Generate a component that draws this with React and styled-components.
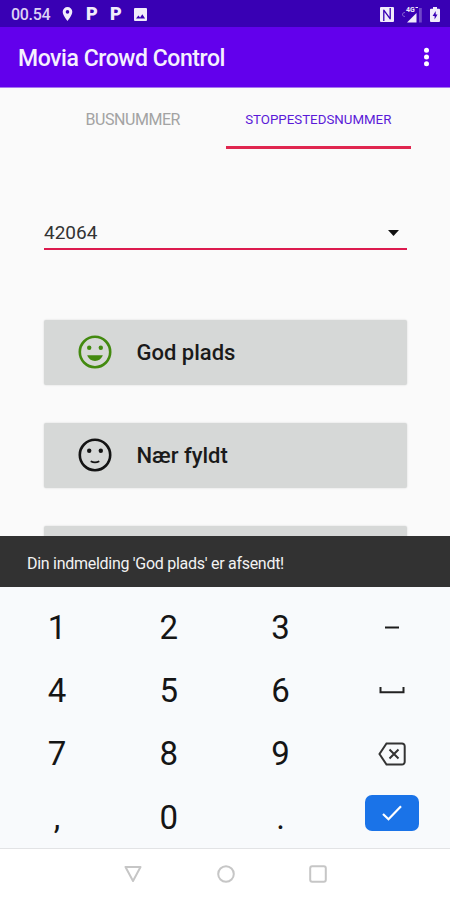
import React, { useState } from 'react';
import styled, { createGlobalStyle } from 'styled-components';

const GlobalStyle = createGlobalStyle`
  * {
    box-sizing: border-box;
  }

  body {
    margin: 0;
    font-family: Roboto, 'Liberation Sans', sans-serif;
    background: #fafafa;
  }

  button {
    font-family: inherit;
    border: none;
    padding: 0;
    background: none;
  }

  svg {
    display: block;
    flex: none;
  }
`;

const Screen = styled.div`
  width: 450px;
  height: 900px;
  display: flex;
  flex-direction: column;
  overflow: hidden;
  background: #fafafa;
`;

const StatusBar = styled.div`
  height: 27px;
  flex: none;
  display: flex;
  align-items: center;
  justify-content: space-between;
  padding: 1px 10px 0 11px;
  background: #3900b4;
  color: #f1ecfb;
`;

const StatusGroup = styled.div`
  display: flex;
  align-items: center;
  gap: ${({ $gap }) => $gap}px;
`;

const Clock = styled.span`
  width: 41px;
  margin-right: -3px;
  padding-top: 1px;
  color: #ddd2f5;
  font-size: 16px;
  font-weight: 500;
  letter-spacing: -0.3px;
  line-height: 26px;
  white-space: nowrap;
`;

const ParkingMark = styled.span`
  width: 11px;
  font-size: 18px;
  font-weight: 900;
  line-height: 26px;
  text-align: center;
`;

const AppBar = styled.header`
  height: 61px;
  flex: none;
  display: flex;
  align-items: center;
  justify-content: space-between;
  padding: 0 20px 0 18px;
  background: #6200ec;
  border-bottom: 1px solid #a576f0;
`;

const Title = styled.h1`
  margin: 0;
  padding-top: 3px;
  color: #f5f0fe;
  font-size: 23px;
  font-weight: 500;
  letter-spacing: -0.44px;
  line-height: 60px;
`;

const MenuButton = styled.button`
  display: block;
`;

const Content = styled.main`
  height: 448px;
  flex: none;
  overflow: hidden;
`;

const Tabs = styled.nav`
  display: flex;
  height: 61px;
  padding: 0 39px 0 40px;
`;

const Tab = styled.button`
  flex: 1;
  height: 61px;
  padding-top: 4px;
  border-bottom: 3px solid ${({ $active }) => ($active ? '#e0264f' : 'transparent')};
  color: ${({ $active }) => ($active ? '#5a1ad8' : '#a3a3a3')};
  font-size: ${({ $active }) => ($active ? '13.3px' : '16px')};
  letter-spacing: ${({ $active }) => ($active ? '0' : '-0.45px')};
`;

const Spinner = styled.div`
  display: flex;
  align-items: center;
  justify-content: space-between;
  height: 35px;
  margin: 66px 43px 0 44px;
  padding: 2px 8px 0 0;
  border-bottom: 2px solid #dc1a4e;
  color: #333;
  font-size: 19px;
`;

const Options = styled.div`
  display: flex;
  flex-direction: column;
  gap: 38px;
  margin: 70px 43px 0 44px;
`;

const Option = styled.button`
  display: flex;
  align-items: center;
  gap: 24.5px;
  height: 65px;
  padding-left: 34px;
  border-radius: 2px;
  background: #d6d8d7;
  box-shadow: 0 0 2px rgba(0, 0, 0, 0.16);
  color: #1a1a1a;
  font-size: 22px;
  font-weight: 500;
`;

const Snackbar = styled.div`
  height: 51px;
  flex: none;
  display: flex;
  align-items: center;
  padding: 3px 27px 0;
  background: #323232;
  color: #f2f2f2;
  font-size: 16px;
  letter-spacing: -0.28px;
`;

const Keypad = styled.div`
  height: 261px;
  flex: none;
  display: grid;
  grid-template-columns: repeat(4, 111.8px);
  grid-auto-rows: 63.2px;
  padding: 9px 0 0 1px;
  background: #f8fafc;
`;

const Key = styled.button`
  display: flex;
  align-items: center;
  justify-content: center;
  color: #151515;
  font-size: 33px;
  line-height: 1;
`;

const EnterKey = styled.span`
  display: flex;
  align-items: center;
  justify-content: center;
  width: 54px;
  height: 36px;
  margin-bottom: 9px;
  border-radius: 7px;
  background: #1a73e8;
`;

const NavBar = styled.footer`
  flex: 1;
  display: flex;
  align-items: center;
  justify-content: center;
  gap: 74.3px;
  padding: 0 0 1px 1px;
  border-top: 1.5px solid #e2e3e5;
  background: #fff;
`;

const PinIcon = () => (
  <svg width="11" height="14" viewBox="0 0 11 14" fill="currentColor">
    <path fillRule="evenodd" d="M5.500 0a4.800 4.800 0 0 0-4.800 4.800C.7 8.300 5.500 14 5.500 14s4.800-5.700 4.800-9.200A4.800 4.800 0 0 0 5.500 0zm0 3.100a1.800 1.800 0 1 1 0 3.600 1.800 1.800 0 0 1 0-3.600z" />
  </svg>
);

const ImageIcon = () => (
  <svg width="13" height="13" viewBox="0 0 13 13">
    <rect width="13" height="13" rx="1" fill="currentColor" />
    <path d="M2 10.500l2.400-3 1.700 2 2.200-3.200 2.800 4.200z" fill="#3900b4" />
  </svg>
);

const NfcIcon = () => (
  <svg width="14" height="15" viewBox="0 0 14 15" fill="none">
    <rect width="14" height="15" rx="1" fill="currentColor" />
    <path d="M3.800 14V3.200l6.400 8.600V1" stroke="#3900b4" strokeWidth="1.300" strokeLinejoin="round" />
  </svg>
);

const SignalIcon = () => (
  <svg width="22" height="17" viewBox="0 0 22 17">
    <path d="M4 6.500c-1.800 0-2.500 1-2.500 2s.7 2 2.500 2" stroke="currentColor" strokeOpacity="0.400" fill="none" />
    <path d="M15.500 7v9.500H6z" fill="currentColor" />
    <path d="M18 2h2.800v14.500H18z" fill="currentColor" opacity="0.300" />
    <text x="5" y="5.800" fontSize="7" fontWeight="700" fill="currentColor">4G</text>
    <path d="M14.500 1.500h2.500" stroke="currentColor" />
  </svg>
);

const BatteryIcon = () => (
  <svg width="10" height="15" viewBox="0 0 10 15">
    <path d="M3 0h4v1.700h2a1 1 0 0 1 1 1V14a1 1 0 0 1-1 1H1a1 1 0 0 1-1-1V2.700a1 1 0 0 1 1-1h2z" fill="currentColor" />
    <path d="M5.700 4L2.600 9h2v3.500L7.500 7.500h-1.800z" fill="#3900b4" />
  </svg>
);

const MoreIcon = () => (
  <svg width="7" height="20" viewBox="0 0 7 20" fill="#fff">
    <circle cx="3.500" cy="3.300" r="2.500" />
    <circle cx="3.500" cy="10" r="2.500" />
    <circle cx="3.500" cy="16.700" r="2.500" />
  </svg>
);

const FaceIcon = ({ color, happy }) => (
  <svg width="34" height="36" viewBox="0 0 34 36" fill="none">
    <circle cx="17" cy="17" r="15.200" stroke={color} strokeWidth="2.600" />
    <circle cx="11.200" cy="12.800" r="2.200" fill={color} />
    <circle cx="22.800" cy="12.800" r="2.200" fill={color} />
    {happy ? (
      <path d="M9.200 20.300h15.600c-1.200 3.500-4.200 5.700-7.800 5.700s-6.600-2.200-7.800-5.700z" fill={color} />
    ) : (
      <path d="M12.700 23.300c2.400 1.300 6.200 1.300 8.600 0" stroke={color} strokeWidth="1.800" />
    )}
  </svg>
);

const SpaceIcon = () => (
  <svg width="26" height="10" viewBox="0 0 26 10" fill="none">
    <path d="M1.500 1v5.200h23V1" stroke="#222" strokeWidth="2" />
  </svg>
);

const BackspaceIcon = () => (
  <svg width="28" height="24" viewBox="0 0 28 24" fill="none" stroke="#333" strokeWidth="2">
    <path d="M8.500 1.500H24a2.700 2.700 0 0 1 2.700 2.700v15.600a2.700 2.700 0 0 1-2.700 2.700H8.500L1.500 12z" />
    <path d="M11.500 7.500l9 9M20.500 7.500l-9 9" />
  </svg>
);

const CheckIcon = () => (
  <svg width="20" height="16" viewBox="0 0 20 16" fill="none">
    <path d="M1 9l5.500 5.300L19 1.300" stroke="#fff" strokeWidth="2.200" />
  </svg>
);

const keys = [
  '1', '2', '3', '–',
  '4', '5', '6', 'space',
  '7', '8', '9', 'backspace',
  ',', '0', '.', 'enter',
];

const keyFaces = {
  '–': (
    <svg width="14" height="3" viewBox="0 0 14 3">
      <rect y="0.500" width="14" height="2" fill="#1c1c1c" />
    </svg>
  ),
  space: <SpaceIcon />,
  backspace: <BackspaceIcon />,
  enter: (
    <EnterKey>
      <CheckIcon />
    </EnterKey>
  ),
};

export default function App() {
  const [tab, setTab] = useState('stop');

  return (
    <>
      <GlobalStyle />
      <Screen>
        <StatusBar>
          <StatusGroup $gap={13}>
            <Clock>00.54</Clock>
            <PinIcon />
            <ParkingMark>P</ParkingMark>
            <ParkingMark>P</ParkingMark>
            <ImageIcon />
          </StatusGroup>
          <StatusGroup $gap={7}>
            <NfcIcon />
            <SignalIcon />
            <BatteryIcon />
          </StatusGroup>
        </StatusBar>

        <AppBar>
          <Title>Movia Crowd Control</Title>
          <MenuButton>
            <MoreIcon />
          </MenuButton>
        </AppBar>

        <Content>
          <Tabs>
            <Tab $active={tab === 'bus'} onClick={() => setTab('bus')}>BUSNUMMER</Tab>
            <Tab $active={tab === 'stop'} onClick={() => setTab('stop')}>STOPPESTEDSNUMMER</Tab>
          </Tabs>

          <Spinner>
            <span>42064</span>
            <svg width="11" height="6" viewBox="0 0 11 6">
              <path d="M0 0h11L5.500 6z" fill="#111" />
            </svg>
          </Spinner>

          <Options>
            <Option>
              <FaceIcon color="#438a10" happy />
              God plads
            </Option>
            <Option>
              <FaceIcon color="#141414" />
              Nær fyldt
            </Option>
            <Option />
          </Options>
        </Content>

        <Snackbar>Din indmelding 'God plads' er afsendt!</Snackbar>

        <Keypad>
          {keys.map((key) => (
            <Key key={key}>{keyFaces[key] || key}</Key>
          ))}
        </Keypad>

        <NavBar>
          <svg width="18" height="18" viewBox="0 0 18 18" fill="none" stroke="#c6c6c6" strokeWidth="2" strokeLinejoin="round">
            <path d="M1.500 2h15L9 16z" />
          </svg>
          <svg width="18" height="18" viewBox="0 0 18 18" fill="none" stroke="#c6c6c6" strokeWidth="2">
            <circle cx="9" cy="9" r="7.800" />
          </svg>
          <svg width="18" height="18" viewBox="0 0 18 18" fill="none" stroke="#c6c6c6" strokeWidth="2">
            <rect x="1.200" y="1.200" width="15.600" height="15.600" rx="2" />
          </svg>
        </NavBar>
      </Screen>
    </>
  );
}
